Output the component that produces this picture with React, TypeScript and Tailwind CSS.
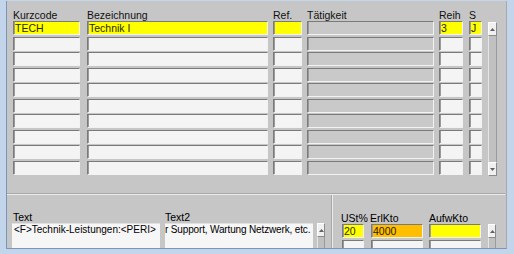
import React from "react";

type Cell = { text?: string; bg?: "yellow" | "white" | "gray" | "orange" };

const ROWS = 10;

function Field({ text, bg = "white", className = "" }: Cell & { className?: string }) {
  const color =
    bg === "yellow"
      ? "bg-[#ffff00] text-[#2a2a00]"
      : bg === "orange"
      ? "bg-[#ffbf00] text-[#2a1a00]"
      : bg === "gray"
      ? "bg-[#c9c9c9]"
      : "bg-[#f4f4f4]";
  return (
    <div
      className={`h-[14px] border border-t-[#7a7a7a] border-l-[#7a7a7a] border-b-[#f2f2f2] border-r-[#f2f2f2] shadow-[inset_1px_0_0_#9a9a9a] pl-[1px] leading-[12px] whitespace-nowrap overflow-hidden ${color} ${className}`}
    >
      {text}
    </div>
  );
}

function Arrow({ down = false }: { down?: boolean }) {
  return (
    <svg width="5" height="3" viewBox="0 0 5 3" className={down ? "rotate-180" : ""}>
      <path d="M0 3 L2.5 0 L5 3 Z" fill="#606060" />
    </svg>
  );
}

function ScrollBtn({ down = false }: { down?: boolean }) {
  return (
    <div className="h-[14px] w-full flex items-center justify-center bg-[#f0f0f0] border border-t-white border-l-white border-b-[#8a8a8a] border-r-[#8a8a8a]">
      <Arrow down={down} />
    </div>
  );
}

function Column({ label, width, cells, ml }: { label: string; width: string; cells: Cell[]; ml: string }) {
  return (
    <div className={`flex flex-col ${width} ${ml}`}>
      <div className="h-[12px] leading-[12px] whitespace-nowrap text-[#111]">{label}</div>
      <div className="grid grid-rows-[repeat(10,15.5px)]">
        {cells.map((c, i) => (
          <Field key={i} {...c} />
        ))}
      </div>
    </div>
  );
}

function fill(first: Cell, rest: Cell["bg"] = "white"): Cell[] {
  return [first, ...Array.from({ length: ROWS - 1 }, () => ({ bg: rest }))];
}

export default function App() {
  const cols = [
    { label: "Kurzcode", width: "w-[67px]", ml: "ml-0", cells: fill({ text: "TECH", bg: "yellow" }) },
    { label: "Bezeichnung", width: "w-[181px]", ml: "ml-[7px]", cells: fill({ text: "Technik I", bg: "yellow" }) },
    { label: "Ref.", width: "w-[29px]", ml: "ml-[5px]", cells: fill({ bg: "yellow" }) },
    { label: "Tätigkeit", width: "w-[127px]", ml: "ml-[5px]", cells: fill({ bg: "gray" }, "gray") },
    { label: "Reih", width: "w-[24px]", ml: "ml-[5px]", cells: fill({ text: "3", bg: "yellow" }) },
    { label: "S", width: "w-[13px]", ml: "ml-[6px]", cells: fill({ text: "J", bg: "yellow" }) },
  ];

  return (
    <div className="w-[514px] h-[254px] bg-[#c3d5ea] pl-[6px] pt-[1px] pr-[7px] pb-[5px] font-['Liberation_Sans',Arial,sans-serif] text-[10.5px] overflow-hidden">
      <div className="h-full bg-[#c6c6c6] border-l border-l-[#7b96b8] border-r border-r-[#a9a9a9] border-b border-b-[#7b96b8] flex flex-col overflow-hidden">
        {/* list block */}
        <div className="flex pl-[6px] pt-[8px]">
          {cols.map((c) => (
            <Column key={c.label} {...c} />
          ))}
          <div className="flex flex-col w-[9px] ml-[6px]">
            <div className="h-[12px]" />
            <div className="h-[154px] flex flex-col mt-[1px]">
              <ScrollBtn />
              <div className="flex-1 bg-[#c0c0c0] border-l border-l-[#e6e6e6] border-r border-r-[#9a9a9a]" />
              <ScrollBtn down />
            </div>
          </div>
        </div>

        {/* separator */}
        <div className="mt-[17px] h-[2px] border-t border-t-[#a8a8a8] border-b border-b-[#ececec] mr-[1px]" />

        {/* detail block */}
        <div className="flex flex-1">
          <div className="w-[324px] flex pl-[5px] pt-[16px]">
            <div className="flex flex-col w-[148px]">
              <div className="h-[12px] leading-[12px] pl-[1px]">Text</div>
              <div className="flex-1 bg-[#f6f6f6] border-t border-t-[#e0e0e0] pl-[2px] text-[10px] leading-[11px] whitespace-nowrap overflow-hidden">
                &lt;F&gt;Technik-Leistungen:&lt;PERI&gt;
              </div>
            </div>
            <div className="flex flex-col w-[148px] ml-[5px]">
              <div className="h-[12px] leading-[12px]">Text2</div>
              <div className="flex-1 bg-[#f6f6f6] border-t border-t-[#e0e0e0] text-[10px] tracking-[-0.15px] leading-[11px] whitespace-nowrap overflow-hidden">
                r Support, Wartung Netzwerk, etc.
              </div>
            </div>
            <div className="flex flex-col w-[8px] ml-[4px]">
              <div className="h-[12px]" />
              <ScrollBtn />
              <div className="flex-1 bg-[#c0c0c0] border-l border-l-[#e6e6e6] border-r border-r-[#9a9a9a]" />
            </div>
          </div>
          <div className="w-[2px] border-l border-l-[#a8a8a8] border-r border-r-[#ececec]" />
          <div className="flex-1 flex pl-[9px] pt-[17px]">
            <div className="flex flex-col w-[22px]">
              <div className="h-[12px] leading-[12px] whitespace-nowrap -ml-[1px]">USt%</div>
              <div className="flex flex-col gap-[2px]">
                <Field text="20" bg="yellow" className="h-[13px]" />
                <Field />
              </div>
            </div>
            <div className="flex flex-col w-[52px] ml-[7px]">
              <div className="h-[12px] leading-[12px] whitespace-nowrap -ml-[1px]">ErlKto</div>
              <div className="flex flex-col gap-[2px]">
                <Field text="4000" bg="orange" className="h-[13px]" />
                <Field />
              </div>
            </div>
            <div className="flex flex-col w-[52px] ml-[6px]">
              <div className="h-[12px] leading-[12px] whitespace-nowrap">AufwKto</div>
              <div className="flex flex-col gap-[2px]">
                <Field bg="yellow" className="h-[13px]" />
                <Field />
              </div>
            </div>
            <div className="flex flex-col w-[8px] ml-[7px]">
              <div className="h-[12px]" />
              <ScrollBtn />
              <div className="flex-1 bg-[#c0c0c0] border-l border-l-[#e6e6e6] border-r border-r-[#9a9a9a]" />
            </div>
          </div>
        </div>
      </div>
    </div>
  );
}
